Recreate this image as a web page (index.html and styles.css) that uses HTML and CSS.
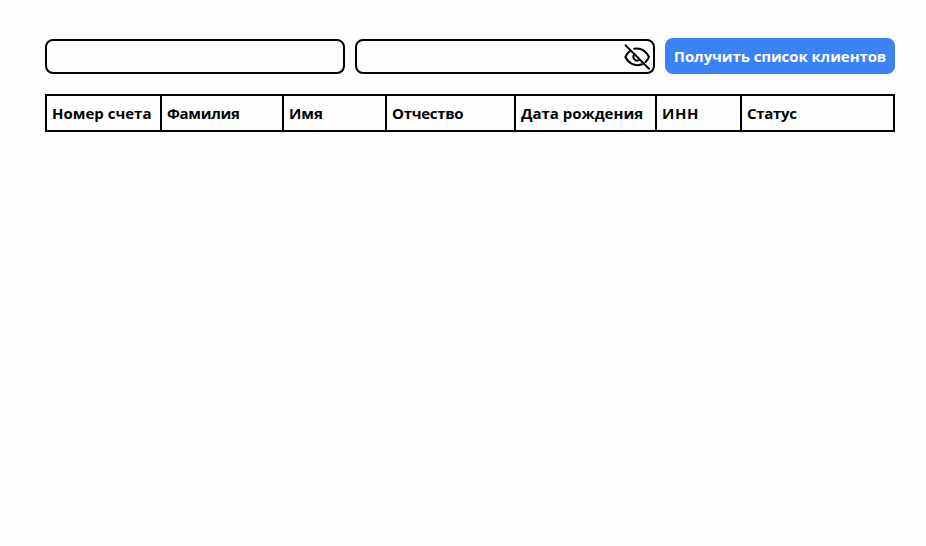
FILE: index.html
```html
<!DOCTYPE html>
<html lang="ru">
<head>
<meta charset="utf-8">
<title>Клиенты</title>
<link rel="stylesheet" href="styles.css">
</head>
<body>
<main class="page">
  <form class="toolbar">
    <input class="field" type="text">
    <div class="password">
      <input class="field" type="password">
      <svg class="eye" viewBox="0 0 26 26" fill="none" stroke="#000" stroke-width="2" stroke-linecap="round" stroke-linejoin="round">
        <path d="M10.2 4.8C17.5 3.4 22.2 7.7 25 13C24.2 15 23 16.7 21.6 18M18.2 20.3C10.5 23 4.3 19 1.4 13C2.6 10.2 4.2 8.2 6.2 6.9"/>
        <path d="M10.2 10.3C7.6 14.2 12 18.3 15.6 15.8"/>
        <path d="M1.6 1.4L25 24.8"/>
      </svg>
    </div>
    <button class="submit" type="button">Получить список клиентов</button>
  </form>
  <table class="clients">
    <colgroup><col class="c-account"><col class="c-surname"><col class="c-name"><col class="c-patronymic"><col class="c-birth"><col class="c-inn"><col class="c-status"></colgroup>
    <thead>
      <tr><th>Номер счета</th><th class="tight">Фамилия</th><th>Имя</th><th class="tight">Отчество</th><th>Дата рождения</th><th class="wide">ИНН</th><th class="tight">Статус</th></tr>
    </thead>
  </table>
</main>
</body>
</html>
```
FILE: styles.css
```css
* { box-sizing: border-box; }
body {
  margin: 0;
  background: #fefefe;
  color: #000;
  font-family: "Segoe UI", "Open Sans", sans-serif;
}
.page { width: 850px; margin: 38px 0 0 45px; }
.toolbar { display: flex; align-items: flex-start; gap: 10px; margin: 0 0 20px; }
.field {
  display: block;
  width: 300px;
  height: 35px;
  margin: 1px 0 0;
  border: 2px solid #000;
  border-radius: 8px;
  background: #fefefe;
  font: inherit;
  outline: none;
}
.password { position: relative; }
.eye { position: absolute; left: 269px; top: 6px; width: 26px; height: 26px; }
.submit {
  width: 230px;
  height: 36px;
  padding: 1px 0 0;
  border: 0;
  border-radius: 8px;
  background: #3b82f6;
  color: #fff;
  font: 700 15px/35px "Segoe UI", "Open Sans", sans-serif;
  letter-spacing: -0.1px;
  white-space: nowrap;
}
.clients { width: 850px; table-layout: fixed; border-collapse: separate; border-spacing: 0; border-right: 2px solid #000; }
.clients th {
  height: 38px;
  padding: 0 0 0 5px;
  border: 2px solid #000;
  border-right: 0;
  text-align: left;
  font-size: 15px;
  line-height: 20px;
  white-space: nowrap;
}
.clients .tight { letter-spacing: -0.3px; }
.clients .wide { letter-spacing: 0.6px; }
.c-account { width: 115px; }
.c-surname { width: 122px; }
.c-name { width: 103px; }
.c-patronymic { width: 129px; }
.c-birth { width: 141px; }
.c-inn { width: 85px; }
.c-status { width: 153px; }
```
